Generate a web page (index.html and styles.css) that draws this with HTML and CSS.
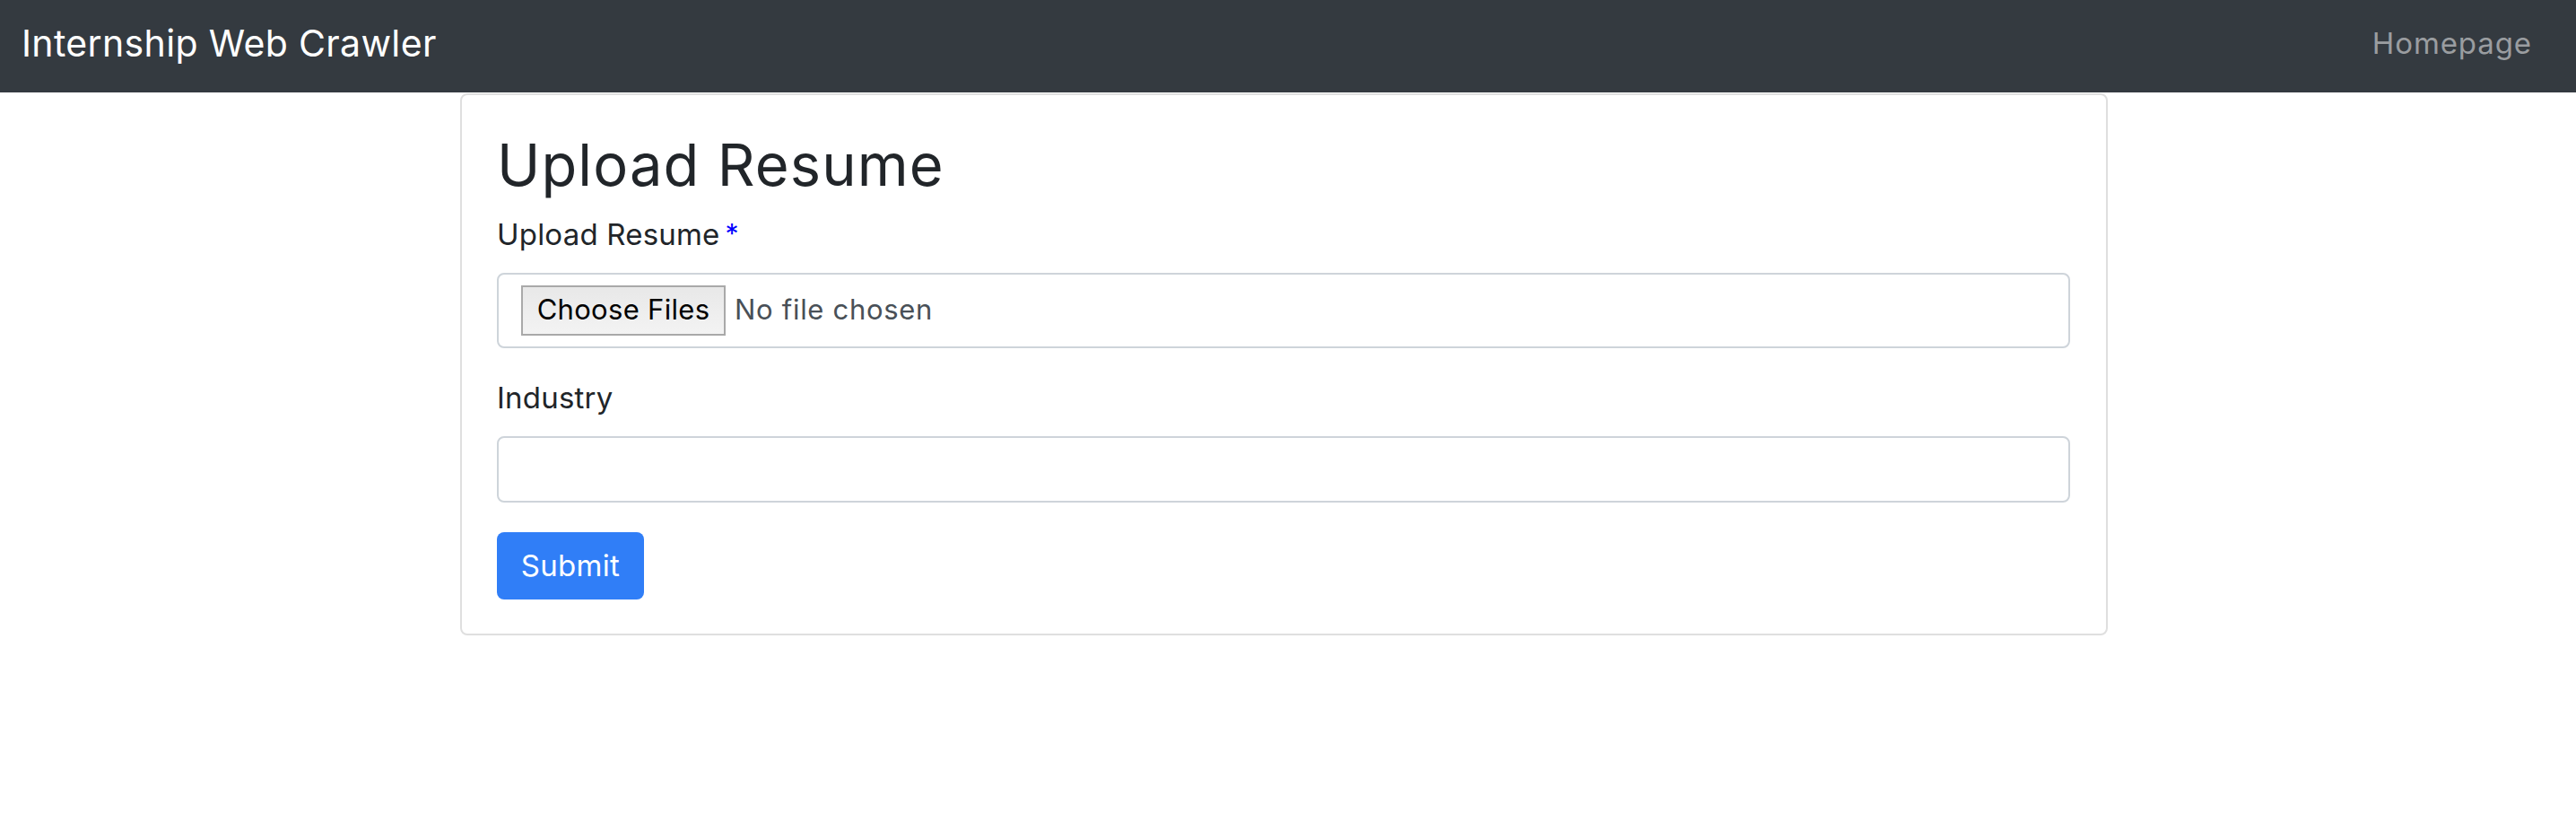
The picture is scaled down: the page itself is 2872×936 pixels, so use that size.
FILE: index.html
```html
<!DOCTYPE html>
<html lang="en">
<head>
<meta charset="utf-8">
<title>Upload Resume</title>
<link rel="stylesheet" href="styles.css">
</head>
<body>
<nav class="navbar">
  <a class="brand" href="#">Internship Web Crawler</a>
  <a class="nav-link" href="#">Homepage</a>
</nav>
<main class="card">
  <h1 class="title">Upload Resume</h1>
  <form class="form">
    <label class="label label-file">Upload Resume<span class="req">*</span></label>
    <div class="file-box">
      <span class="file-btn">Choose Files</span>
      <span class="file-text">No file chosen</span>
    </div>
    <label class="label label-industry" for="industry">Industry</label>
    <input class="text-input" id="industry" type="text">
    <button class="submit" type="button">Submit</button>
  </form>
</main>
</body>
</html>
```
FILE: styles.css
```css
* { box-sizing: border-box; }
html, body { margin: 0; padding: 0; background: #fff; }
body { font-family: Inter, "Noto Sans", sans-serif; color: #212529; }

.navbar {
  height: 103px;
  background: #343a40;
  display: flex;
  align-items: center;
  justify-content: space-between;
  padding: 0 49px 6px 24px;
}
.brand {
  color: #fff;
  text-decoration: none;
  font-size: 41px;
  line-height: 1;
  letter-spacing: 0.35px;
}
.nav-link {
  color: #9a9da0;
  text-decoration: none;
  font-size: 33px;
  line-height: 1;
  letter-spacing: 0.9px;
}

.card {
  width: 1837px;
  height: 604px;
  margin-left: 513px;
  margin-top: 1px;
  border: 2px solid #dfdfdf;
  border-radius: 8px;
  padding: 39px 40px 0 39px;
}
.title {
  margin: 0;
  font-size: 65px;
  line-height: 78px;
  font-weight: 400;
  letter-spacing: 1.1px;
}
.form { display: flex; flex-direction: column; align-items: flex-start; }
.label {
  font-size: 33px;
  line-height: 48px;
  color: #212529;
  letter-spacing: 0.2px;
}
.label-file { margin-top: 13px; }
.req { color: #0000ff; margin-left: 6px; font-size: 30px; vertical-align: 2px; }
.file-box {
  margin-top: 19px;
  width: 100%;
  height: 84px;
  border: 2px solid #ced4da;
  border-radius: 8px;
  display: flex;
  align-items: center;
  padding-left: 25px;
}
.file-btn {
  height: 56px;
  width: 228px;
  border: 2px solid #a9a9a9;
  background: linear-gradient(#e8e8e8, #f3f3f3);
  color: #000;
  font-size: 31px;
  line-height: 1;
  padding-bottom: 4px;
  display: flex;
  align-items: center;
  justify-content: center;
  letter-spacing: 0.3px;
}
.file-text {
  margin-left: 10px;
  font-size: 31px;
  line-height: 1;
  padding-bottom: 4px;
  color: #495057;
  letter-spacing: 0.7px;
}
.label-industry { margin-top: 31px; }
.text-input {
  margin-top: 19px;
  width: 100%;
  height: 74px;
  border: 2px solid #ced4da;
  border-radius: 8px;
  font-family: inherit;
  font-size: 31px;
  padding: 0 24px;
  background: #fff;
}
.submit {
  margin-top: 33px;
  width: 164px;
  height: 75px;
  border: none;
  border-radius: 8px;
  background: #307ef7;
  color: #fff;
  font-family: inherit;
  font-size: 33px;
  padding: 0 0 2px;
  letter-spacing: 0.3px;
}
```
